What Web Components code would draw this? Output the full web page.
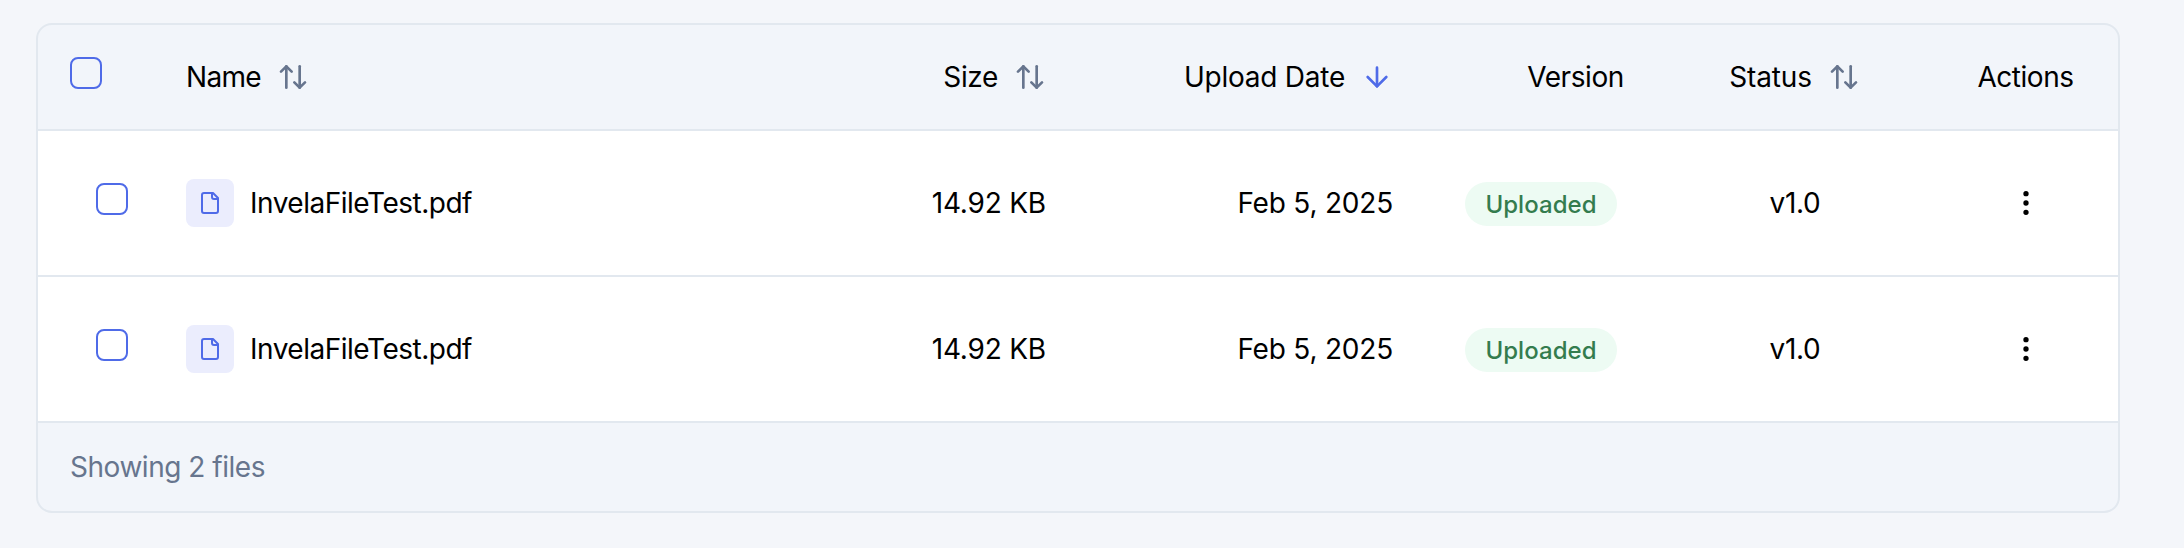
<!DOCTYPE html>
<html lang="en">
<head>
<meta charset="utf-8">
<title>Files</title>
<style>
  body { margin: 0; background: #f4f6fa; font: 400 28px/40px Inter, "Liberation Sans", sans-serif; color: #000; }
</style>
</head>
<body>
<file-table>
  <file-row name="InvelaFileTest.pdf" size="14.92 KB" date="Feb 5, 2025" status="Uploaded" version="v1.0"></file-row>
  <file-row name="InvelaFileTest.pdf" size="14.92 KB" date="Feb 5, 2025" status="Uploaded" version="v1.0"></file-row>
  <span slot="footer">Showing 2 files</span>
</file-table>
<script>
  const COLUMNS = '116px 640px 284px 347px 232px 276px 185px';
  const ICONS = {
    sort: '<path d="m21 16-4 4-4-4"/><path d="M17 20V4"/><path d="m3 8 4-4 4 4"/><path d="M7 4v16"/>',
    down: '<path d="M12 5v14"/><path d="m19 12-7 7-7-7"/>',
    file: '<path d="M15 2H6a2 2 0 0 0-2 2v16a2 2 0 0 0 2 2h12a2 2 0 0 0 2-2V7Z"/><path d="M14 2v4a2 2 0 0 0 2 2h4"/>',
    more: '<circle cx="12" cy="12" r="1"/><circle cx="12" cy="5" r="1"/><circle cx="12" cy="19" r="1"/>'
  };

  class UiIcon extends HTMLElement {
    connectedCallback() {
      this.attachShadow({ mode: 'open' }).innerHTML = `
        <style>
          :host { display: block; flex: none; width: 32px; height: 32px; }
          svg { display: block; width: 100%; height: 100%; }
        </style>
        <svg viewBox="0 0 24 24" fill="none" stroke="currentColor" stroke-width="2" stroke-linecap="round" stroke-linejoin="round">${ICONS[this.getAttribute('name')]}</svg>`;
    }
  }

  class UiCheckbox extends HTMLElement {
    connectedCallback() {
      this.attachShadow({ mode: 'open' }).innerHTML = `
        <style>
          :host { display: block; box-sizing: border-box; width: 32px; height: 32px; border: 2px solid #4f6be8; border-radius: 8px; }
        </style>`;
      this.setAttribute('role', 'checkbox');
    }
  }

  class StatusBadge extends HTMLElement {
    connectedCallback() {
      this.attachShadow({ mode: 'open' }).innerHTML = `
        <style>
          :host { display: block; padding: 7px 20px 5px; border-radius: 22px; background: #edfbf3; color: #347c4e; font-size: 24px; line-height: 32px; font-weight: 500; letter-spacing: 0.05px; }
        </style><slot></slot>`;
    }
  }

  class HeadCell extends HTMLElement {
    connectedCallback() {
      const sort = this.getAttribute('sort');
      this.attachShadow({ mode: 'open' }).innerHTML = `
        <style>
          :host { display: flex; align-items: center; gap: 16px; padding: 0 32px; white-space: nowrap; letter-spacing: var(--tracking, 0); }
          :host([align="end"]) { justify-content: flex-end; }
          :host([align="center"]) { justify-content: center; padding: 0; }
          ui-icon { color: #67758e; }
          ui-icon[name="down"] { color: #4f6be8; }
        </style>
        <span><slot></slot></span>${sort ? `<ui-icon name="${sort}"></ui-icon>` : ''}`;
    }
  }

  class FileRow extends HTMLElement {
    connectedCallback() {
      const a = n => this.getAttribute(n);
      this.attachShadow({ mode: 'open' }).innerHTML = `
        <style>
          :host { display: grid; grid-template-columns: ${COLUMNS}; height: 144px; background: #fff; border-bottom: 2px solid #e2e8ef; }
          div { display: flex; align-items: center; white-space: nowrap; }
          .check { padding: 0 0 8px 58px; }
          .name { padding-left: 32px; gap: 16px; letter-spacing: -0.49px; }
          .tile { justify-content: center; width: 48px; height: 48px; border-radius: 8px; background: #ebedfd; color: #4f6be8; }
          .tile ui-icon { width: 24px; height: 24px; }
          .end { justify-content: flex-end; padding-right: 32px; letter-spacing: -0.2px; }
          .mid { justify-content: center; }
          .version { letter-spacing: -0.3px; }
          .badge { padding-top: 2px; }
        </style>
        <div class="check"><ui-checkbox></ui-checkbox></div>
        <div class="name"><div class="tile"><ui-icon name="file"></ui-icon></div><span>${a('name')}</span></div>
        <div class="end">${a('size')}</div>
        <div class="end">${a('date')}</div>
        <div class="mid badge"><status-badge>${a('status')}</status-badge></div>
        <div class="mid version">${a('version')}</div>
        <div class="mid"><ui-icon name="more"></ui-icon></div>`;
    }
  }

  class FileTable extends HTMLElement {
    connectedCallback() {
      this.attachShadow({ mode: 'open' }).innerHTML = `
        <style>
          :host { display: block; box-sizing: border-box; width: 2084px; margin: 23px 0 0 36px; border: 2px solid #e2e8ef; border-radius: 16px; overflow: hidden; background: #f2f5fa; }
          header { display: grid; grid-template-columns: ${COLUMNS}; height: 104px; border-bottom: 2px solid #e2e8ef; }
          .check { display: flex; align-items: center; padding: 0 0 8px 32px; }
          footer { display: flex; align-items: center; height: 88px; padding: 0 32px; color: #67758e; letter-spacing: -0.47px; }
        </style>
        <header>
          <div class="check"><ui-checkbox></ui-checkbox></div>
          <head-cell sort="sort" style="--tracking: -0.7px">Name</head-cell>
          <head-cell sort="sort" align="end" style="--tracking: -0.35px">Size</head-cell>
          <head-cell sort="down" align="end" style="--tracking: -0.25px">Upload Date</head-cell>
          <head-cell align="end" style="--tracking: -0.4px; padding-right: 33px">Version</head-cell>
          <head-cell sort="sort" align="center" style="--tracking: -0.15px; padding-right: 1px">Status</head-cell>
          <head-cell align="center" style="--tracking: -0.45px">Actions</head-cell>
        </header>
        <slot></slot>
        <footer><slot name="footer"></slot></footer>`;
    }
  }

  customElements.define('ui-icon', UiIcon);
  customElements.define('ui-checkbox', UiCheckbox);
  customElements.define('status-badge', StatusBadge);
  customElements.define('head-cell', HeadCell);
  customElements.define('file-row', FileRow);
  customElements.define('file-table', FileTable);
</script>
</body>
</html>
